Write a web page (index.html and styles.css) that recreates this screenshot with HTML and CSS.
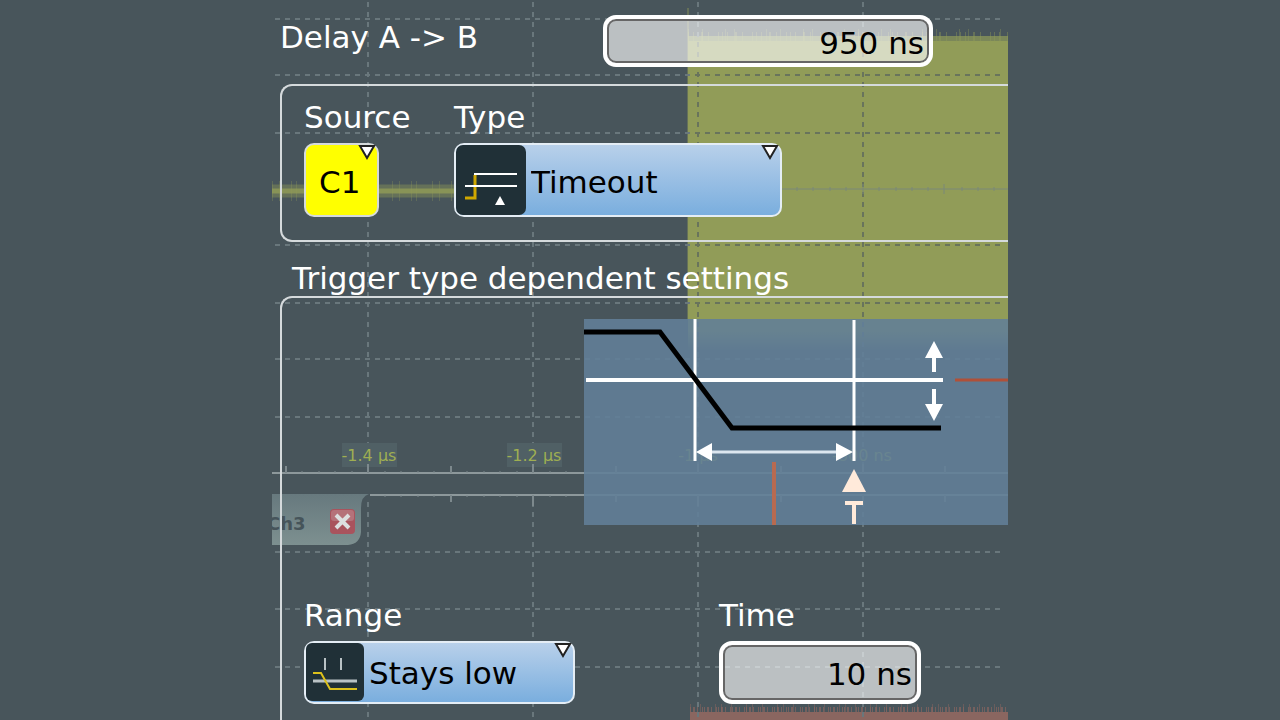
FILE: index.html
```html
<!DOCTYPE html>
<html lang="en">
	<head>
		<meta charset="utf-8">
		<title>Trigger sequence setup</title>
		<link rel="stylesheet" href="styles.css">
	</head>
	<body>
		<main class="screen">
			<!-- waveform behind the dialog -->
			<svg class="scope" width="736" height="720" viewBox="0 0 736 720" aria-hidden="true">
				<defs>
					<linearGradient id="tab" x1="0" y1="0" x2="0" y2="1">
						<stop offset="0" stop-color="#67797e"/>
						<stop offset="1" stop-color="#7d9090"/>
					</linearGradient>
					<linearGradient id="fade" x1="0" y1="0" x2="0" y2="1">
						<stop offset="0" stop-color="#919c58"/>
						<stop offset="1" stop-color="#919c58" stop-opacity="0"/>
					</linearGradient>
				</defs>
				<!-- C1 trace -->
				<rect class="olive" x="416" y="41" width="320" height="290"/>
				<rect x="416" y="331" width="320" height="20" fill="url(#fade)"/>
				<path class="olive-line" stroke-width="6" opacity=".7" d="M416 39H736"/>
				<path class="olive-line" stroke-width="10" opacity=".4" stroke-dasharray="1 4 1 7 2 5 1 9 1 3" d="M416 37H736"/>
				<path class="olive-line" stroke-width="14" opacity=".35" stroke-dasharray="1 13 1 22 1 8 1 31" d="M416 36H736"/>
				<path class="olive-line" stroke-width="2" opacity=".4" d="M416 8V320"/>
				<path class="olive-line" stroke-width="5" opacity=".8" d="M0 191H182"/>
				<path class="olive-line" stroke-width="13" opacity=".4" d="M0 191H182"/>
				<path class="olive-line" stroke-width="20" opacity=".3" stroke-dasharray="1 6 1 11 1 4 1 15" d="M0 191H182"/>
				<!-- C3 trace -->
				<rect x="418" y="712" width="318" height="8" fill="#8a6660"/>
				<path stroke="#8a6660" stroke-width="8" opacity=".7" stroke-dasharray="1 2 2 2 1 4 1 1" d="M418 711H736"/>
				<path stroke="#8a6660" stroke-width="14" opacity=".5" stroke-dasharray="1 9 1 14 1 5" d="M418 711H736"/>
				<!-- grid -->
				<g class="grid">
					<path d="M3 19H733M3 75H733M3 133H733M3 245H733M3 303H733M3 359H733M3 417H733"/>
					<path d="M3 552H733M3 609H733M3 667H733"/>
					<path d="M96 2V472M261 2V472M426 2V472M591 2V472"/>
					<path d="M96 502V720M261 502V720M426 502V720M591 502V720"/>
				</g>
				<g class="grid grid-dark">
					<path d="M423 75H733M423 133H733M423 245H733M423 303H733M426 42V318M591 42V318"/>
				</g>
				<path class="mid" d="M510 189H736M672 184V194M591 184V194M525 187V191M541 187V191M558 187V191M574 187V191M607 187V191M624 187V191M640 187V191M656 187V191M690 187V191M706 187V191M722 187V191"/>
				<!-- time labels -->
				<g class="time-box">
					<rect x="70" y="443" width="55" height="24"/>
					<rect x="235" y="443" width="55" height="24"/>
				</g>
				<g class="time-text">
					<text x="97" y="461">-1.4 µs</text>
					<text x="262" y="461">-1.2 µs</text>
					<text x="426" y="461">-1 µs</text>
					<text x="590" y="461">-800 ns</text>
				</g>
				<!-- axes -->
				<path class="axis" stroke-width="2" d="M0 473H736M98 495H736"/>
				<path class="ticks" stroke-width="2" d="M14 466V473M96 464V473M179 466V473M261 464V473M344 466V473M426 464V473M509 466V473M591 464V473M673 466V473M179 495V502M261 495V506M344 495V502M426 495V506M509 495V502M591 495V506M673 495V502"/>
				<path class="ticks" d="M30 471V473M47 471V473M63 471V473M80 471V473M113 471V473M129 471V473M146 471V473M162 471V473M195 471V473M212 471V473M228 471V473M245 471V473M278 471V473M294 471V473M113 495V497M129 495V497M146 495V497M162 495V497M195 495V497M212 495V497M228 495V497M245 495V497M278 495V497M294 495V497"/>
				<!-- channel tab -->
				<path d="M0 494H97Q89 496 89 508V532Q88 544 76 545H0Z" fill="url(#tab)"/>
				<text class="tab-text" x="-5" y="530">Ch3</text>
				<rect x="58" y="509" width="25" height="25" rx="4" fill="#a9535d"/>
				<rect x="59" y="510" width="23" height="11" rx="3" fill="#b5727a"/>
				<path d="M64 515L77 528M77 515L64 528" stroke="#dcdfe0" stroke-width="4"/>
			</svg>

			<form class="dialog">
				<div class="delay">
					<label for="delay">Delay A -&gt; B</label>
					<input class="number" type="text" id="delay" value="950 ns">
				</div>

				<div class="group event">
					<div class="field field-source">
						<label for="source">Source</label>
						<div class="combo">
							<select class="source" id="source"><option>C1</option></select>
							<svg class="arrow" width="18" height="16" viewBox="0 0 18 16"><path d="M2 2H16L9 14Z"/></svg>
						</div>
					</div>
					<div class="field field-type">
						<label for="type">Type</label>
						<div class="combo">
							<select class="type" id="type"><option>Timeout</option></select>
							<svg class="icon" width="70" height="70" viewBox="0 0 70 70">
								<rect width="70" height="70" rx="7" fill="#203037"/>
								<path d="M9 53H19V30" fill="none" stroke="#d0a800" stroke-width="3"/>
								<path d="M18 29H61M9 41H61" stroke="#fff" stroke-width="2"/>
								<path d="M44 51L49 60H39Z" fill="#fff"/>
							</svg>
							<svg class="arrow" width="18" height="16" viewBox="0 0 18 16"><path d="M2 2H16L9 14Z"/></svg>
						</div>
					</div>
				</div>

				<h2>Trigger type dependent settings</h2>
				<div class="group settings">
					<svg class="diagram" width="424" height="206" viewBox="0 0 424 206" role="img" aria-label="Timeout">
						<g fill="none" stroke="#fff">
							<path d="M2 61H359" stroke-width="4"/>
							<path d="M111 0V142M270 1V142" stroke-width="3"/>
							<path d="M125 133H258" stroke-width="3" stroke="#dce6ef"/>
							<path d="M350 36V53M350 70V88" stroke-width="4"/>
						</g>
						<path d="M112 133L128 124V142ZM269 133L252 124V142ZM350 22L359 39H341ZM350 102L359 85H341Z" fill="#fff"/>
						<path d="M0 13H76L148 109H357" fill="none" stroke="#000" stroke-width="5"/>
						<path d="M371 61H424" stroke="#b05038" stroke-width="3"/>
						<path d="M190 143V206" stroke="#b86a50" stroke-width="4"/>
						<path d="M270 150L282 173H258Z" fill="#ffeada"/>
						<path d="M261 184H279M270 184V205" stroke="#ffeada" stroke-width="4"/>
					</svg>
					<div class="fields">
						<div class="field field-range">
							<label for="range">Range</label>
							<div class="combo">
								<select class="range" id="range"><option>Stays low</option></select>
								<svg class="icon" width="58" height="58" viewBox="0 0 58 58">
									<rect width="58" height="58" rx="6" fill="#203037"/>
									<path d="M19 15V27M35 15V27" stroke="#b9c2c5" stroke-width="2"/>
									<path d="M7 38H51" stroke="#b9c2c5" stroke-width="3"/>
									<path d="M7 30H15L24 46H51" fill="none" stroke="#dcc01c" stroke-width="2"/>
								</svg>
								<svg class="arrow" width="18" height="16" viewBox="0 0 18 16"><path d="M2 2H16L9 14Z"/></svg>
							</div>
						</div>
						<div class="field">
							<label for="time">Time</label>
							<input class="number time" type="text" id="time" value="10 ns">
						</div>
					</div>
				</div>
			</form>
		</main>
	</body>
</html>
```

FILE: styles.css
```css
* {
	box-sizing: border-box;
}

body {
	margin: 0;
	background: #48555b;
	color: #fff;
	font-family: "DejaVu Sans", Verdana, sans-serif;
	font-size: 31px;
	line-height: 36px;
}

.screen {
	position: relative;
	max-width: 736px;
	height: 100vh;
	margin: 0 auto;
	overflow: hidden;
}

/*** Waveform ***/

.scope {
	position: absolute;
	top: 0;
	left: 0;
}

.olive {
	fill: #919c58;
}

.olive-line {
	stroke: #919c58;
	fill: none;
}

.grid {
	fill: none;
	stroke: #69777c;
	stroke-dasharray: 5 5;
}

.grid path {
	stroke-width: 2px;
}

.grid-dark {
	stroke: #69745c;
}

.mid {
	stroke: #7b8878;
	fill: none;
}

.axis {
	stroke: #8d989b;
}

.ticks {
	stroke: #7d898d;
}

.time-box {
	fill: #506065;
}

.time-text {
	fill: #9fae52;
	font-size: 16px;
	text-anchor: middle;
}

.tab-text {
	fill: #46545a;
	font-size: 18px;
	font-weight: bold;
}

/*** Dialog ***/

.dialog {
	position: relative;
	display: flex;
	flex-direction: column;
	min-height: 100%;
	padding: 15px 0 0 8px;
}

.delay {
	display: grid;
	grid-template-columns: 323px 330px;
	margin-bottom: 17px;
}

.delay label {
	padding: 4px 0 0;
}

h2 {
	margin: 18px 0 0;
	padding-left: 12px;
	font-size: 31px;
	font-weight: normal;
	line-height: 36px;
	white-space: nowrap;
}

.group {
	border: 2px solid #d5dadc;
	border-right: 0;
	border-radius: 12px 0 0 12px;
}

.event {
	display: flex;
	padding: 13px 0 23px 22px;
}

.settings {
	flex: 1;
	display: flex;
	flex-direction: column;
	padding: 21px 0 0 22px;
	border-bottom: 0;
	border-radius: 12px 0 0 0;
}

.field {
	display: flex;
	flex-direction: column;
	gap: 8px;
}

.field-source {
	width: 150px;
	align-items: flex-start;
}

.field-type {
	width: 328px;
}

.field-range {
	width: 271px;
}

.fields {
	display: flex;
	gap: 144px;
}

.diagram {
	align-self: flex-end;
	margin-bottom: 72px;
	background: rgba(98, 127, 152, .89);
}

/*** Controls ***/

.number {
	width: 100%;
	height: 52px;
	padding: 3px 5px 0;
	border: 4px solid #fff;
	border-radius: 13px;
	box-shadow: inset 0 0 0 2px #666;
	background: rgba(255, 255, 255, .63);
	background-clip: padding-box;
	color: #000;
	font: inherit;
	text-align: right;
}

.time {
	width: 202px;
	height: 63px;
}

.combo {
	position: relative;
}

.combo select {
	appearance: none;
	display: block;
	height: 74px;
	border: 2px solid #e4edf5;
	border-radius: 10px;
	background: linear-gradient(#b8d0ea, #7aaede);
	color: #000;
	font: inherit;
}

.combo .source {
	width: 75px;
	padding: 3px 0 0 13px;
	border-color: #d5dadc;
	background: #ff0;
}

.combo .type {
	width: 100%;
	padding: 3px 0 0 75px;
}

.combo .range {
	width: 100%;
	height: 63px;
	padding: 0 0 0 63px;
}

.icon {
	position: absolute;
	top: 2px;
	left: 2px;
}

.arrow {
	position: absolute;
	top: 1px;
	right: 3px;
	fill: #fff;
	stroke: #222;
	stroke-width: 2px;
	pointer-events: none;
}
```
